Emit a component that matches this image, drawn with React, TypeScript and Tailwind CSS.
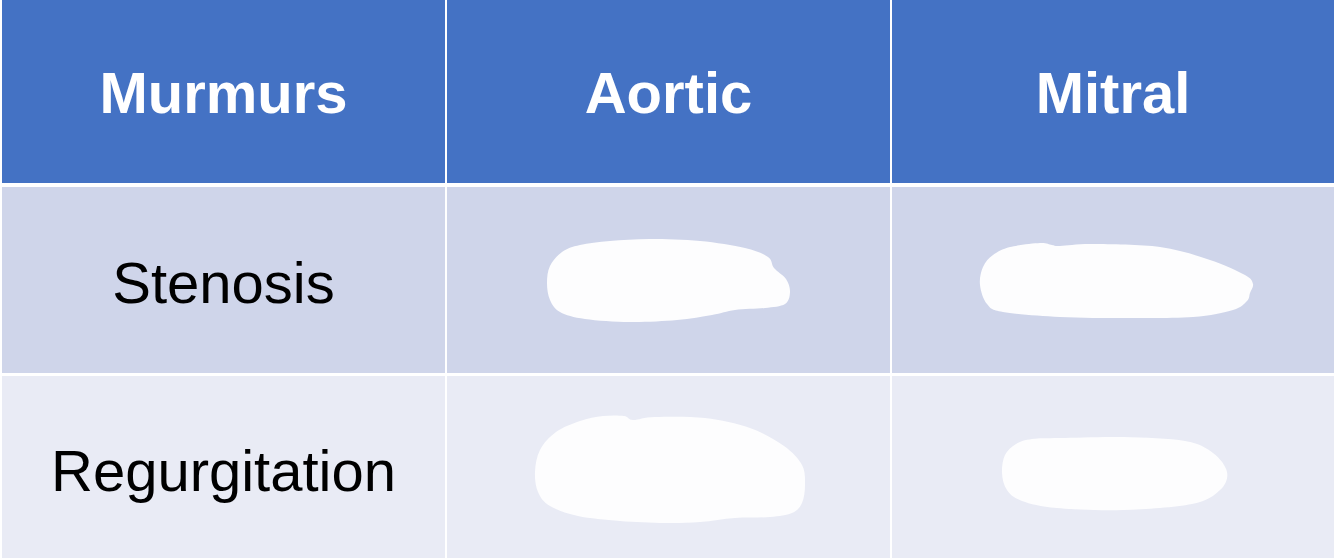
import React from 'react';

type Pt = [number, number];

// closed catmull-rom -> cubic bezier path
function smoothPath(pts: Pt[]): string {
  const n = pts.length;
  let d = `M${pts[0][0]},${pts[0][1]}`;
  for (let i = 0; i < n; i++) {
    const p0 = pts[(i - 1 + n) % n];
    const p1 = pts[i];
    const p2 = pts[(i + 1) % n];
    const p3 = pts[(i + 2) % n];
    const c1: Pt = [p1[0] + (p2[0] - p0[0]) / 6, p1[1] + (p2[1] - p0[1]) / 6];
    const c2: Pt = [p2[0] - (p3[0] - p1[0]) / 6, p2[1] - (p3[1] - p1[1]) / 6];
    d += ` C${c1[0].toFixed(1)},${c1[1].toFixed(1)} ${c2[0].toFixed(1)},${c2[1].toFixed(1)} ${p2[0]},${p2[1]}`;
  }
  return d + ' Z';
}

const BLOBS: Record<string, Pt[]> = {
  stenosisAortic: [
    [547, 283], [550, 266], [562, 252], [580, 245], [610, 241], [650, 239], [700, 241],
    [745, 248], [768, 257], [774, 268], [786, 279], [790, 292], [785, 304],
    [765, 308], [735, 310], [712, 315], [677, 320], [630, 322], [585, 319], [560, 312], [550, 300],
  ],
  stenosisMitral: [
    [980, 285], [983, 267], [993, 255], [1010, 247], [1040, 243], [1052, 245],
    [1060, 246], [1093, 244], [1160, 247], [1210, 260], [1245, 275], [1253, 284],
    [1250, 293], [1247, 301], [1233, 310], [1193, 317], [1127, 318], [1060, 317],
    [1003, 312], [987, 304],
  ],
  regurgAortic: [
    [535, 472], [540, 450], [556, 432], [580, 421], [603, 416], [624, 416], [633, 420],
    [655, 417], [705, 418], [750, 428], [784, 446], [802, 465], [805, 485],
    [802, 503], [792, 513], [770, 517], [735, 518], [700, 522], [665, 523],
    [620, 521], [578, 516], [550, 506], [538, 492],
  ],
  regurgMitral: [
    [1002, 473], [1005, 455], [1016, 444], [1032, 439], [1060, 438], [1123, 437], [1185, 441],
    [1213, 453], [1227, 472], [1220, 490], [1192, 504], [1123, 510], [1057, 508],
    [1022, 501], [1007, 490],
  ],
};

function Blob({ name, box }: { name: string; box: string }) {
  return (
    <svg className="h-full w-full" viewBox={box} preserveAspectRatio="none">
      <path d={smoothPath(BLOBS[name])} fill="#fdfdfe" />
    </svg>
  );
}

export default function App() {
  return (
    <div
      className="flex h-[558px] w-[1334px] flex-col bg-white pl-[2px]"
      style={{ fontFamily: '"Liberation Sans", Arial, sans-serif' }}
    >
      {/* header */}
      <div className="flex h-[183px] gap-[2px]">
        <div className="flex w-[443px] items-center justify-center bg-[#4472c4] pt-[2px] text-[58px] font-bold text-white">
          Murmurs
        </div>
        <div className="flex w-[443px] items-center justify-center bg-[#4472c4] pt-[2px] text-[58px] font-bold text-white">
          Aortic
        </div>
        <div className="flex flex-1 items-center justify-center bg-[#4472c4] pt-[2px] text-[58px] font-bold text-white">
          Mitral
        </div>
      </div>

      {/* stenosis */}
      <div className="mt-[4px] flex h-[186px] gap-[2px]">
        <div className="flex w-[443px] items-center justify-center bg-[#cfd5ea] pt-[5px] text-[58px] text-black">
          Stenosis
        </div>
        <div className="w-[443px] bg-[#cfd5ea]">
          <Blob name="stenosisAortic" box="447 187 443 186" />
        </div>
        <div className="flex-1 bg-[#cfd5ea]">
          <Blob name="stenosisMitral" box="892 187 442 186" />
        </div>
      </div>

      {/* regurgitation */}
      <div className="mt-[3px] flex flex-1 gap-[2px]">
        <div className="flex w-[443px] items-center justify-center bg-[#e9ebf5] pt-[7px] text-[58px] text-black">
          Regurgitation
        </div>
        <div className="w-[443px] bg-[#e9ebf5]">
          <Blob name="regurgAortic" box="447 376 443 182" />
        </div>
        <div className="flex-1 bg-[#e9ebf5]">
          <Blob name="regurgMitral" box="892 376 442 182" />
        </div>
      </div>
    </div>
  );
}
